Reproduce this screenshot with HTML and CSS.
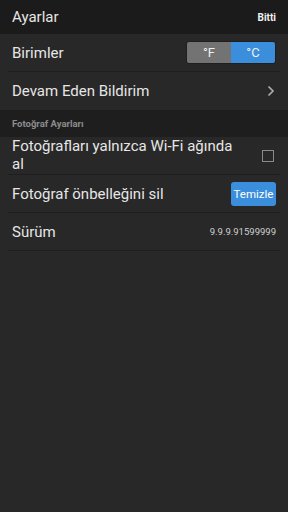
FILE: index.html
```html
<!DOCTYPE html>
<html lang="tr">
<head>
    <meta charset="UTF-8">
    <meta name="viewport" content="width=device-width, initial-scale=1.0">
    <title>Ayarlar</title>
    <link rel="stylesheet" href="styles.css">
</head>
<body>
    <div class="header">
        <span class="title">Ayarlar</span>
        <span class="done">Bitti</span>
    </div>

    <div class="list">
        <div class="row">
            <span class="label">Birimler</span>
            <div class="toggle">
                <span class="toggle-opt">°F</span>
                <span class="toggle-opt active">°C</span>
            </div>
        </div>
        <div class="row last">
            <span class="label">Devam Eden Bildirim</span>
            <svg class="chevron" width="8" height="12" viewBox="0 0 8 12">
                <path d="M1.5 1.5 L6 6 L1.5 10.5" fill="none" stroke="#b0b0b0" stroke-width="1.6"/>
            </svg>
        </div>
    </div>

    <div class="section">Fotoğraf Ayarları</div>

    <div class="list">
        <div class="row">
            <span class="label wrap">Fotoğrafları yalnızca Wi-Fi ağında al</span>
            <span class="checkbox"></span>
        </div>
        <div class="row">
            <span class="label">Fotoğraf önbelleğini sil</span>
            <button class="btn">Temizle</button>
        </div>
        <div class="row">
            <span class="label">Sürüm</span>
            <span class="version">9.9.9.91599999</span>
        </div>
    </div>
</body>
</html>
```

FILE: styles.css
```css
body {
    margin: 0;
    background: #282828;
    font-family: Roboto, "Noto Sans", sans-serif;
    color: #e6e6e6;
    width: 288px;
    min-height: 512px;
}
.header {
    display: flex;
    align-items: center;
    justify-content: space-between;
    height: 34px;
    padding: 0 12px 0 12px;
    background: #1b1b1b;
}
.title {
    font-size: 15px;
}
.done {
    font-size: 10px;
    font-weight: bold;
    color: #f2f2f2;
}
.list {
    margin: 0 8px;
}
.row {
    display: flex;
    align-items: center;
    justify-content: space-between;
    min-height: 37px;
    padding: 0 4px;
    border-bottom: 1px solid #1e1e1e;
}
.row.last {
    border-bottom: none;
    min-height: 38px;
}
.label {
    font-size: 15px;
}
.label.wrap {
    width: 232px;
    line-height: 17.5px;
    padding: 1px 0;
}
.toggle {
    display: flex;
    width: 90px;
    height: 23px;
    border-radius: 3px;
    overflow: hidden;
    border: 1px solid #1f1f1f;
    box-sizing: border-box;
}
.toggle-opt {
    flex: 1;
    display: flex;
    align-items: center;
    justify-content: center;
    background: #737373;
    color: #f0f0f0;
    font-size: 13px;
}
.toggle-opt.active {
    background: #3a8edb;
}
.chevron {
    margin-right: 1px;
}
.section {
    height: 27px;
    display: flex;
    align-items: center;
    padding-left: 12px;
    background: #1e1e1e;
    color: #8c8c8c;
    font-size: 9.5px;
    font-weight: bold;
}
.checkbox {
    width: 10px;
    height: 10px;
    border: 1px solid #8a8a8a;
    margin-right: 2px;
}
.btn {
    width: 45px;
    height: 24px;
    padding: 0;
    border: none;
    border-radius: 3px;
    background: #3a8edb;
    color: #ffffff;
    font-family: Roboto, "Noto Sans", sans-serif;
    font-size: 11.5px;
}
.version {
    font-size: 9.5px;
    color: #d0d0d0;
}
```
